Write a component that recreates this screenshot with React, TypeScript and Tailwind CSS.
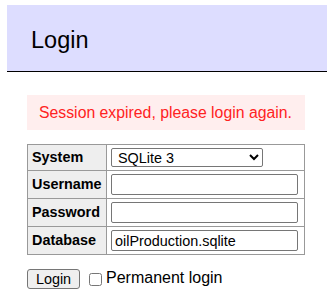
export default function App() {
  const rows = [
    { label: "System", kind: "select" },
    { label: "Username", kind: "text", value: "" },
    { label: "Password", kind: "password", value: "" },
    { label: "Database", kind: "text", value: "oilProduction.sqlite" },
  ];

  return (
    <div className="pt-[5px] pl-[7px] pr-[3px] font-['Liberation_Sans',Arial,sans-serif] text-black">
      <h2 className="h-[67px] bg-[#ddf] border-b border-black pl-[24px] pt-[21px] text-[23.5px] leading-[28px] font-normal">
        Login
      </h2>

      <div className="pl-[20px]">
        <div className="mt-[23px] w-[278px] h-[35px] bg-[#fee] text-[#f22] text-[15.8px] px-[12px] flex items-center whitespace-nowrap">
          Session expired, please login again.
        </div>

        <div className="mt-[14px] w-[278px] grid grid-cols-[79px_198px] border-t border-l border-[#999]">
          {rows.map((r) => (
            <div key={r.label} className="contents">
              <div className="bg-[#eee] border-r border-b border-[#999] pl-[4px] flex items-center text-[14.4px] font-bold">
                {r.label}
              </div>
              <div className="border-r border-b border-[#999] pl-[4px] py-[3px] flex items-center">
                {r.kind === "select" ? (
                  <select
                    defaultValue="sqlite"
                    className="w-[152px] h-[19px] border border-[#767676] rounded-[2px] text-[14.4px] leading-none pl-[2px]"
                  >
                    <option value="sqlite">SQLite 3</option>
                  </select>
                ) : (
                  <input
                    type={r.kind}
                    defaultValue={r.value}
                    className="w-[187px] h-[21px] border border-[#767676] rounded-[2px] px-[3px] text-[14.4px] leading-none"
                  />
                )}
              </div>
            </div>
          ))}
        </div>

        <div className="mt-[14px] flex items-center">
          <button className="h-[20px] w-[53px] border border-[#767676] rounded-[3px] bg-[#efefef] text-[14.4px] leading-none">
            Login
          </button>
          <label className="flex items-center text-[16px] leading-none">
            <input type="checkbox" className="ml-[9px] mr-[4px] w-[13px] h-[13px]" />
            <span className="-mt-[3px]">Permanent login</span>
          </label>
        </div>
      </div>
    </div>
  );
}
